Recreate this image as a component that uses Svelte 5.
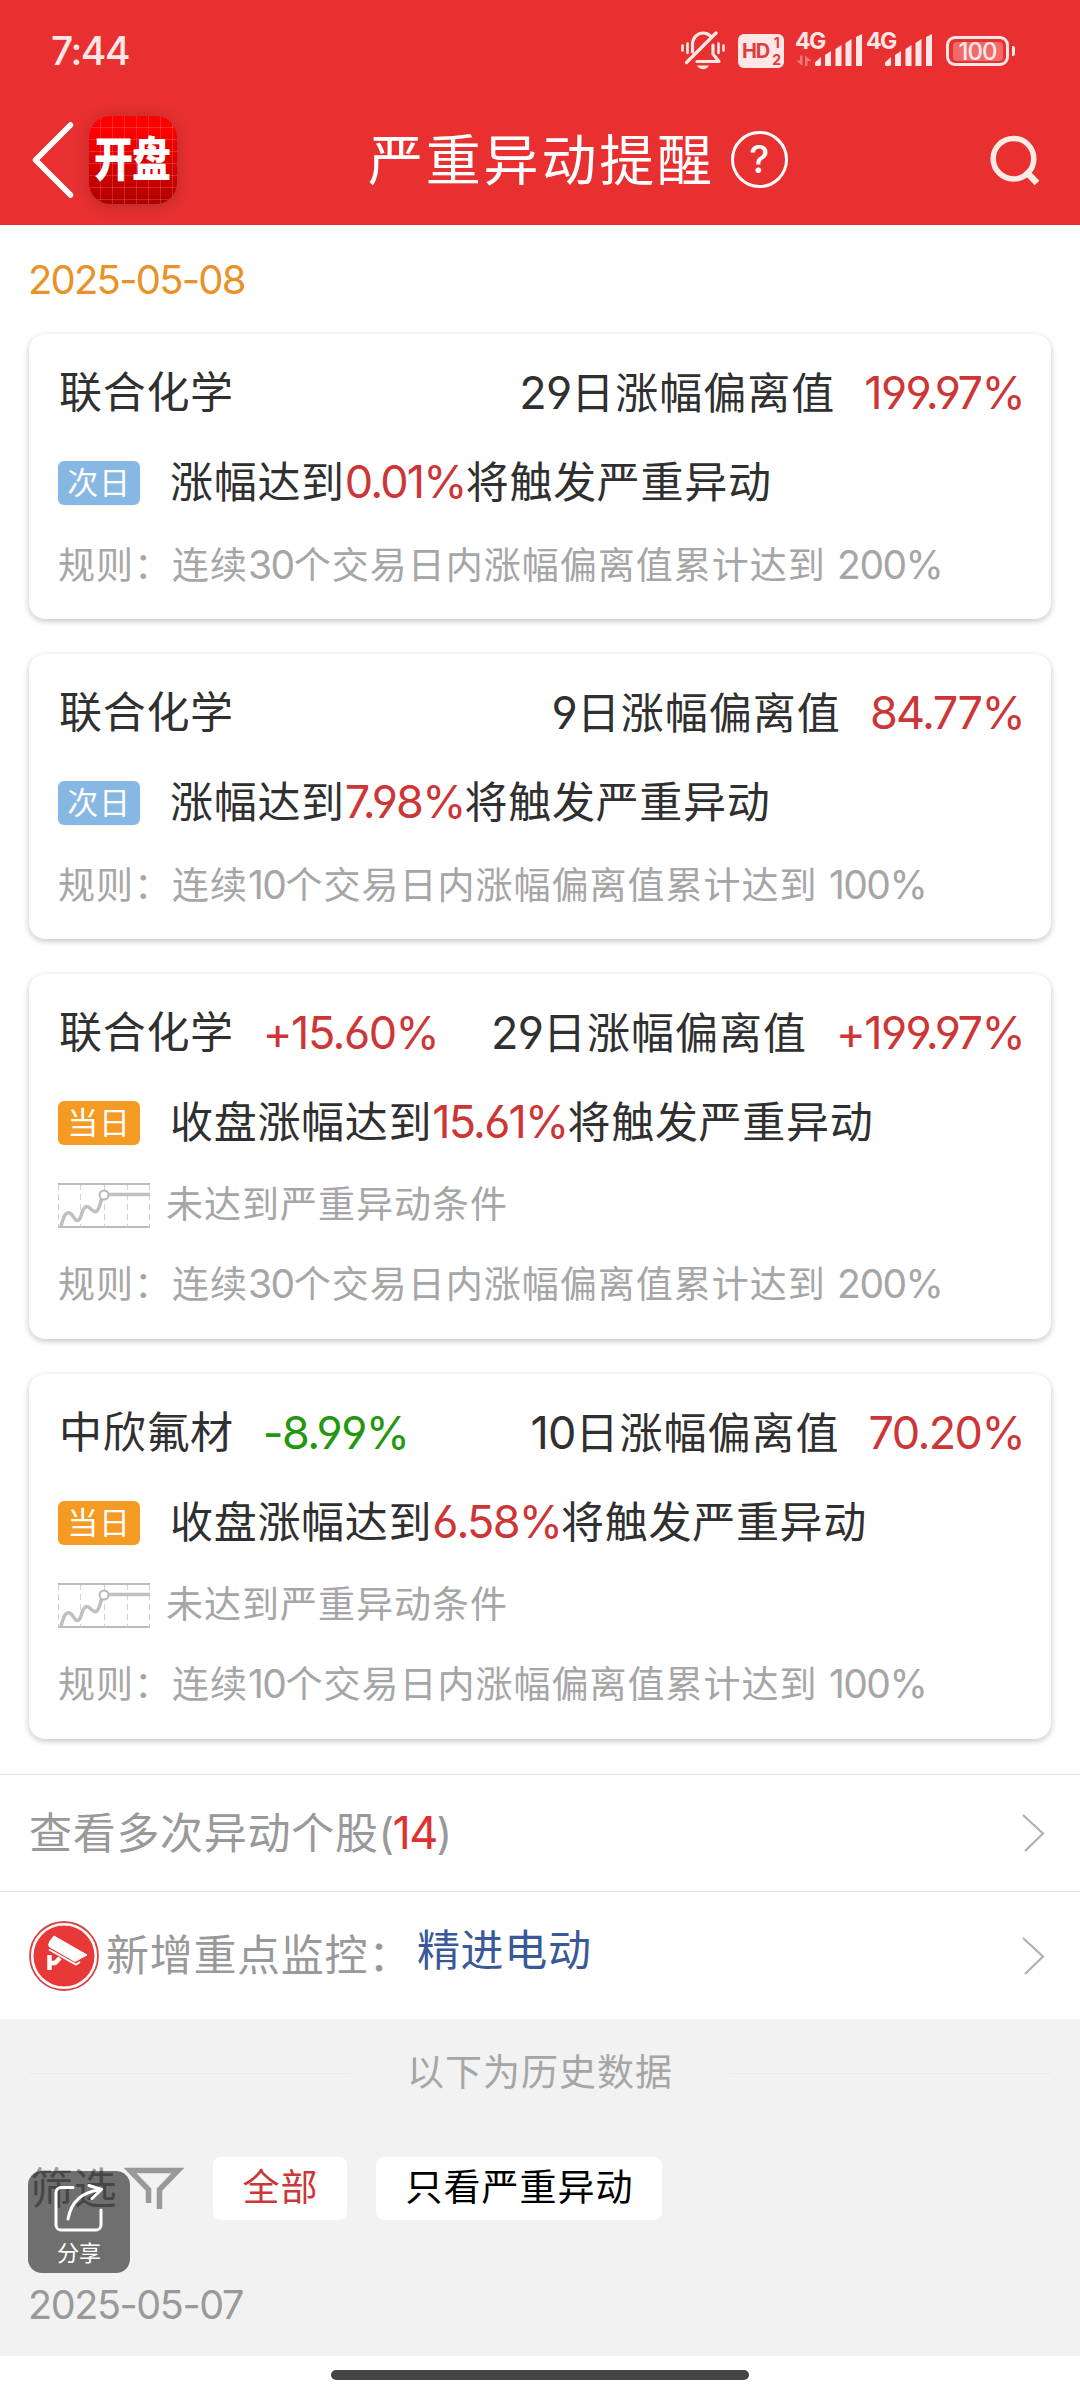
<script lang='ts'>
  type Alert = {
    name: string
    change?: string
    days: number
    deviation: string
    tag: '次日' | '当日'
    lead: string
    trigger: string
    status?: string
    period: number
    limit: string
  }

  const alerts: Alert[] = [
    { name: '联合化学', days: 29, deviation: '199.97%', tag: '次日', lead: '涨幅达到', trigger: '0.01%', period: 30, limit: '200%' },
    { name: '联合化学', days: 9, deviation: '84.77%', tag: '次日', lead: '涨幅达到', trigger: '7.98%', period: 10, limit: '100%' },
    { name: '联合化学', change: '+15.60%', days: 29, deviation: '+199.97%', tag: '当日', lead: '收盘涨幅达到', trigger: '15.61%', status: '未达到严重异动条件', period: 30, limit: '200%' },
    { name: '中欣氟材', change: '-8.99%', days: 10, deviation: '70.20%', tag: '当日', lead: '收盘涨幅达到', trigger: '6.58%', status: '未达到严重异动条件', period: 10, limit: '100%' },
  ]

  const filters = ['全部', '只看严重异动']
  let activeFilter = '全部'
</script>

<div class='screen'>
  <header>
    <div class='status-bar'>
      <span class='clock'>7:44</span>
      <div class='status-icons'>
        <svg class='bell' width='44' height='40' viewBox='0 0 44 40' fill='none' stroke='currentColor' stroke-width='3.2' stroke-linecap='round' stroke-linejoin='round'>
          <path d='M11.5 21V13.5C11.5 7 16 2 22 2C25 2 27.500 3 29.500 5'></path>
          <path d='M32 14V23L38 30.500H16'></path>
          <path d='M35 2L5.500 31.500'></path>
          <path d='M1.500 14.500V19.500M6.500 12.500V22M42.500 14.500V19.500M37.500 12.500V22' stroke-width='2.600'></path>
          <path d='M16 34.500H28C26.500 37 24.500 38.300 22 38.300S17.500 37 16 34.500Z' fill='currentColor' stroke='none'></path>
        </svg>
        <div class='hd'>
          <span>HD</span>
          <div class='hd-sims'><span>1</span><span>2</span></div>
        </div>
        {#each [true, false] as active}
          <div class='signal' class:with-data={active}>
            <span class='net'>4G</span>
            <svg width='68' height='34' viewBox='0 0 68 34' fill='currentColor'>
              {#if active}
                <path class='arrows' d='M4 21.500H6.500V32L0 26.500H4ZM9 32V21.500L15.500 27H11.500V32Z'></path>
              {/if}
              <path d='M19 31V28.500L25 23V31A2 2 0 0 1 23 32H20A1.500 1.500 0 0 1 19 31Z'></path>
              <path d='M29 32V21L35 17V32Z'></path>
              <path d='M39.500 32V15L45.500 11V32Z'></path>
              <path d='M49.500 32V9L55.500 5V32Z'></path>
              <path d='M60 32V3L66 0V32Z'></path>
            </svg>
          </div>
        {/each}
        <div class='battery'><span>100</span></div>
      </div>
    </div>

    <nav>
      <svg class='back' width='44' height='80' viewBox='0 0 44 80' fill='none' stroke='#fff' stroke-width='5.5' stroke-linecap='round' stroke-linejoin='round' aria-hidden='true'>
        <polyline points='39.500 5 4.500 40 39.500 75'></polyline>
      </svg>
      <div class='logo'><span>开盘</span></div>
      <h1>
        严重异动提醒
        <span class='help'>?</span>
      </h1>
      <svg class='search' width='52' height='52' viewBox='0 0 52 52' fill='none' stroke='#fdebe6' aria-hidden='true'>
        <circle cx='23.500' cy='24.700' r='20.300' stroke-width='5.500'></circle>
        <line x1='35.500' y1='37' x2='47' y2='49' stroke-width='6.500'></line>
      </svg>
    </nav>
  </header>

  <main>
    <div class='date'>2025-05-08</div>

    <div class='cards'>
      {#each alerts as alert}
        <article class='card'>
          <div class='row title-row'>
            <span>{alert.name}</span>
            {#if alert.change}
              <span class='num change' class:down={alert.change.startsWith('-')}>{alert.change}</span>
            {/if}
            <span class='deviation'><span class='num'>{alert.days}</span>日涨幅偏离值</span>
            <span class='num up'>{alert.deviation}</span>
          </div>
          <div class='row trigger-row'>
            <span class='tag' class:today={alert.tag === '当日'}>{alert.tag}</span>
            <span>{alert.lead}<span class='num up'>{alert.trigger}</span>将触发严重异动</span>
          </div>
          {#if alert.status}
            <div class='row status-row'>
              <svg width='92' height='45' viewBox='0 0 92 45' fill='none' aria-hidden='true'>
                <path d='M0.500 1V44M22.500 1V44M46.500 1V44M69.500 1V44M91.500 1V44' stroke='#d2d2d2' stroke-dasharray='6 4'></path>
                <path d='M0 1H92M0 44H92' stroke='#bdbdbd' stroke-width='2'></path>
                <path d='M3 43C6 32 8 29 11.500 30C15.500 31 16 38 19.500 37.500C24.500 37 23 24 28.500 23.500C33 23.500 34 30 38 28.500C42 27 42 18 45 13' stroke='#c0c0c0' stroke-width='3.500'></path>
                <path d='M50 11.500H92' stroke='#c0c0c0' stroke-width='3.500'></path>
                <circle cx='46' cy='12' r='4.500' fill='#fff' stroke='#b8b8b8' stroke-width='2'></circle>
              </svg>
              <span>{alert.status}</span>
            </div>
          {/if}
          <div class='row rule-row'>
            <span>规则：连续<span class='num'>{alert.period}</span>个交易日内涨幅偏离值累计达到&nbsp;<span class='num'>{alert.limit}</span></span>
          </div>
        </article>
      {/each}
    </div>

    <div class='link-row multiple'>
      <span>查看多次异动个股<span class='count'>(<em>14</em>)</span></span>
      <svg width='24' height='38' viewBox='0 0 24 38' fill='none' stroke='#b0b0b0' stroke-width='2.200' aria-hidden='true'>
        <polyline points='2 1 22 19.500 4 37'></polyline>
      </svg>
    </div>

    <div class='link-row monitor'>
      <svg class='camera' width='70' height='70' viewBox='0 0 70 70' aria-hidden='true'>
        <circle cx='35' cy='35' r='34' fill='#fff' stroke='#d64444' stroke-width='1.800'></circle>
        <circle cx='35' cy='35' r='30.500' fill='#e83838'></circle>
        <path d='M25 15L58 34L46 40.500L20 25.500Q19 23.500 21 20Z' fill='#fff' stroke='#fff' stroke-linejoin='round'></path>
        <path d='M20 28.500L47 43.500L51 41' fill='none' stroke='#fff' stroke-width='2'></path>
        <path d='M20.500 34V49M20.500 42H26L31 37' fill='none' stroke='#fff' stroke-width='4.500'></path>
      </svg>
      <span>新增重点监控：</span>
      <a href='#stock'>精进电动</a>
      <svg width='24' height='38' viewBox='0 0 24 38' fill='none' stroke='#b0b0b0' stroke-width='2.200' aria-hidden='true'>
        <polyline points='2 1 22 19.500 4 37'></polyline>
      </svg>
    </div>

    <section class='history'>
      <div class='divider'><span>以下为历史数据</span></div>
      <div class='filters'>
        <span class='filter-label'>筛选</span>
        <svg width='60' height='43' viewBox='0 0 60 43' fill='none' stroke='#999' stroke-width='5.500' aria-hidden='true'>
          <path d='M24.500 36V22.500L6 3.500H54L35.500 22.500V42'></path>
        </svg>
        {#each filters as filter}
          <button type='button' class:active={filter === activeFilter} on:click={() => (activeFilter = filter)}>{filter}</button>
        {/each}
      </div>
      <div class='date past'>2025-05-07</div>
      <button type='button' class='share'>
        <svg width='50' height='50' viewBox='0 0 50 50' fill='none' stroke='#fff' stroke-width='3' stroke-linecap='round' stroke-linejoin='round' aria-hidden='true'>
          <path d='M19 3.500H7A5 5 0 0 0 2 8.500V41A5 5 0 0 0 7 46H42A5 5 0 0 0 47 41V26'></path>
          <path d='M14 35C17 19 26 8 46 6'></path>
          <path d='M35 1.500L47.500 5.500L38 14.500'></path>
        </svg>
        <span>分享</span>
      </button>
    </section>
  </main>

  <footer><div class='home-bar'></div></footer>
</div>

<style>
:global(body) {
  background: #fff;
}

.screen {
  display: flex;
  flex-direction: column;
  width: 1080px;
  height: 2400px;
  overflow: hidden;
  background: #fff;
  color: #303030;
  font-family: Inter, 'Noto Sans CJK SC', sans-serif;
  font-size: 43px;
  line-height: 1.2;
  letter-spacing: 0.700px;
  white-space: nowrap;
}

header {
  flex: none;
  height: 225px;
  background: #e83030;
  color: #fff;
}

.status-bar {
  display: flex;
  align-items: center;
  justify-content: space-between;
  height: 102px;
  padding: 0 65px 0 51px;
  color: #ffe7e7;
}

.clock {
  font-size: 39px;
  font-weight: 500;
  letter-spacing: -1.500px;
}

.status-icons {
  display: flex;
  align-items: center;
  font-weight: 700;
  letter-spacing: 0;
}

.hd {
  display: flex;
  align-items: center;
  justify-content: center;
  width: 46px;
  height: 34px;
  margin-left: 13px;
  border-radius: 6px;
  background: #ffe7e7;
  color: #e03c3c;
  font-size: 20px;
  letter-spacing: -1px;
}

.hd-sims {
  display: flex;
  flex-direction: column;
  align-items: center;
  margin-left: 3px;
  font-size: 14px;
  line-height: 17px;
}

.signal {
  position: relative;
  width: 51px;
  height: 34px;
  margin-left: 16px;
}

.signal.with-data {
  width: 55px;
  margin-left: 12px;
}

.signal svg {
  display: block;
  margin-left: -1px;
}

.signal.with-data svg {
  margin-left: 0;
}

.net {
  position: absolute;
  top: -6px;
  left: -1px;
  font-size: 23px;
  line-height: 26px;
  letter-spacing: -1.500px;
}

.arrows {
  opacity: 0.4;
}

.battery {
  position: relative;
  display: flex;
  align-items: center;
  justify-content: center;
  width: 63px;
  height: 30px;
  box-sizing: border-box;
  margin-left: 28px;
  margin-right: 6px;
  border: 3px solid #ffe7e7;
  border-radius: 9px;
}

.battery span {
  width: 50px;
  border-radius: 4px;
  background: #f16a6a;
  font-size: 24px;
  font-weight: 500;
  line-height: 19px;
  letter-spacing: -1px;
  text-align: center;
}

.battery::after {
  content: '';
  position: absolute;
  right: -9px;
  width: 3px;
  height: 10px;
  border-radius: 0 2px 2px 0;
  background: #ffe7e7;
}

nav {
  display: grid;
  grid-template-columns: 58px 88px 1fr 52px;
  align-items: center;
  height: 115px;
  padding: 0 38px 0 31px;
}

.logo {
  display: flex;
  align-items: center;
  justify-content: center;
  height: 88px;
  border-radius: 21px;
  background:
    repeating-linear-gradient(90deg, transparent 0 11px, rgba(255, 255, 255, 0.16) 11px 12px),
    repeating-linear-gradient(180deg, transparent 0 11px, rgba(255, 255, 255, 0.16) 11px 12px),
    linear-gradient(#ff0000 15%, #b00000);
  box-shadow: 0 2px 14px rgba(120, 40, 40, 0.45);
}

.logo span {
  margin-right: 2px;
  font-size: 39px;
  font-weight: 900;
  letter-spacing: -1px;
  transform: scaleY(1.2);
}

h1 {
  display: flex;
  align-items: center;
  margin: 0 0 0 191px;
  font-size: 55px;
  font-weight: 400;
  letter-spacing: 2.800px;
}

.help {
  width: 51px;
  height: 51px;
  margin-left: 16px;
  border: 3px solid #fff;
  border-radius: 50%;
  font-size: 38px;
  font-weight: 500;
  line-height: 51px;
  letter-spacing: 0;
  text-align: center;
}

main {
  display: flex;
  flex-direction: column;
  flex: 1;
}

.date {
  height: 109px;
  padding-left: 28px;
  color: #e8922a;
  font-size: 40px;
  line-height: 109px;
  letter-spacing: -1.800px;
}

.cards {
  display: flex;
  flex-direction: column;
  gap: 35px;
  padding: 0 29px 35px;
}

.card {
  padding: 14px 29px 15px;
  border-radius: 16px;
  box-shadow: 0 2px 6px rgba(0, 0, 0, 0.24);
}

.row {
  display: flex;
  align-items: center;
}

.num {
  font-size: 45px;
  letter-spacing: -1.800px;
  font-feature-settings: 'cv03', 'cv04';
}

.up {
  color: #cc3636;
}

.title-row {
  height: 89px;
  padding-left: 1px;
  margin-right: -2px;
}

.title-row > .up {
  letter-spacing: -1.600px;
}

.change {
  margin-left: 29px;
  color: #cc3636;
  letter-spacing: -1.500px;
}

.change.down {
  color: #24960f;
}

.deviation {
  margin-left: auto;
  margin-right: 29px;
  letter-spacing: 1px;
}

.deviation .num {
  letter-spacing: -0.800px;
}

.trigger-row {
  height: 89px;
}

.tag {
  width: 82px;
  height: 44px;
  margin-top: 2px;
  margin-right: 30px;
  border-radius: 6px;
  background: #86b8e3;
  color: #fff;
  font-size: 31px;
  line-height: 43px;
  text-align: center;
}

.tag.today {
  background: #f59a23;
}

.status-row {
  height: 78px;
  color: #a6a6a6;
  font-size: 37px;
  letter-spacing: 1px;
}

.status-row span {
  margin-left: 16px;
}

.rule-row {
  height: 80px;
  color: #a6a6a6;
  font-size: 37px;
  letter-spacing: 1px;
}

.trigger-row + .rule-row {
  height: 78px;
}

.rule-row .num {
  font-size: 39px;
  letter-spacing: -1.500px;
}

.link-row {
  display: flex;
  align-items: center;
  box-sizing: border-box;
  padding: 0 35px 0 29px;
  border-top: 1px solid #e4e4e4;
  color: #999;
}

.link-row svg:last-child {
  margin-left: auto;
}

.multiple {
  height: 117px;
}

.monitor {
  height: 128px;
}

.monitor .camera {
  margin-right: 7px;
}

.monitor a {
  margin: -10px 0 0 5px;
  color: #3b5998;
  text-decoration: none;
}

.count {
  letter-spacing: -1.700px;
}

.count em {
  color: #e03030;
  font-size: 45px;
  font-style: normal;
}

.history {
  position: relative;
  flex: 1;
  background: #f2f2f2;
}

.divider {
  display: flex;
  align-items: center;
  gap: 57px;
  height: 108px;
  padding: 0 29px;
  color: #a6a6a6;
  font-size: 37px;
  letter-spacing: 1px;
}

.divider::before,
.divider::after {
  content: '';
  flex: 1;
  height: 1px;
  background: #ebebeb;
}

.filters {
  display: flex;
  align-items: center;
  height: 63px;
  padding: 30px 0 0 30px;
}

.filter-label {
  color: #999;
}

.filters svg {
  margin-left: 7px;
}

.filters button {
  height: 63px;
  margin-left: 29px;
  padding: 0 29px;
  border: none;
  border-radius: 8px;
  background: #fff;
  color: #000;
  font: inherit;
  font-size: 37px;
  letter-spacing: 1px;
}

.filters button.active {
  color: #cc3636;
}

.date.past {
  height: 62px;
  margin-top: 54px;
  color: #999;
  font-size: 39.500px;
  line-height: 62px;
  letter-spacing: -1.400px;
}

.share {
  position: absolute;
  top: 152px;
  left: 28px;
  display: flex;
  flex-direction: column;
  align-items: center;
  width: 102px;
  height: 102px;
  padding: 13px 0 0;
  border: none;
  border-radius: 14px;
  background: rgba(0, 0, 0, 0.54);
  color: #fff;
  font: inherit;
  font-size: 22px;
  line-height: 32px;
  letter-spacing: 0;
}

.share span {
  margin-top: 3px;
}

footer {
  display: flex;
  justify-content: center;
  flex: none;
  height: 44px;
}

.home-bar {
  width: 418px;
  height: 10px;
  margin-top: 14px;
  border-radius: 5px;
  background: #454545;
}
</style>
